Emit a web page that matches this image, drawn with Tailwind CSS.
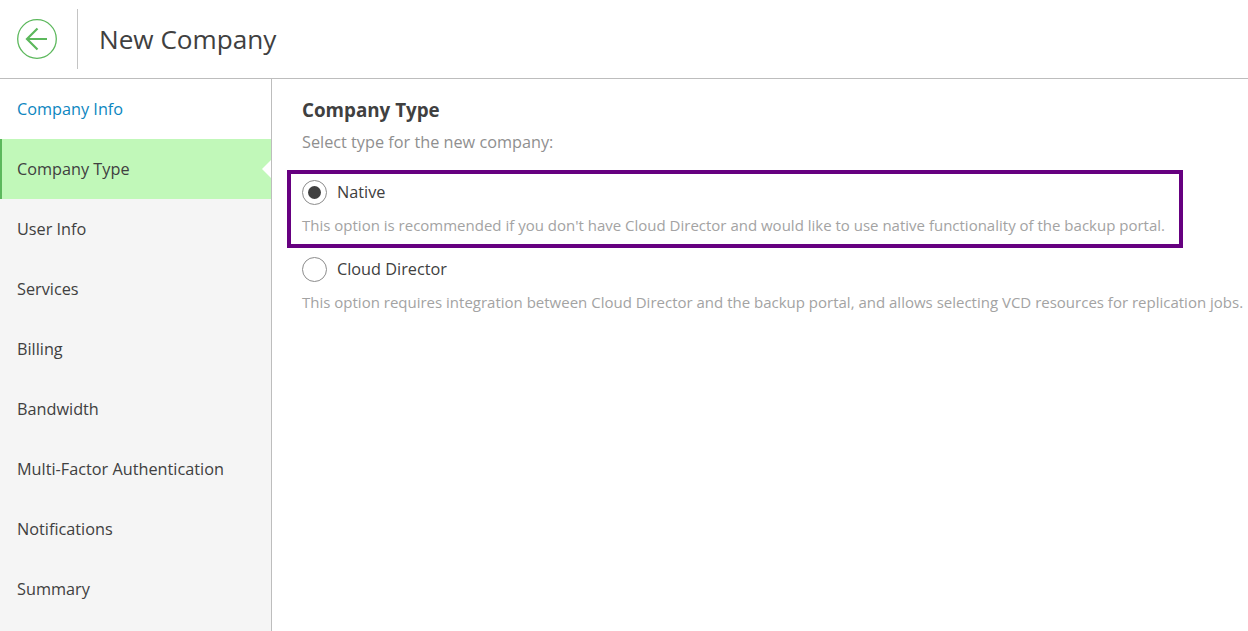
<!DOCTYPE html>
<html lang="en">
<head>
<meta charset="utf-8">
<title>New Company</title>
<script src="https://cdn.jsdelivr.net/npm/@tailwindcss/browser@4"></script>
</head>
<body class="bg-white font-['Open_Sans',sans-serif] text-[#404040] overflow-hidden">
<div class="relative h-[631px] flex flex-col">
    <!-- header -->
    <header class="h-[79px] shrink-0 flex items-center border-b border-[#bdbdbd]">
        <div class="ml-[17px] w-10 h-10 shrink-0">
            <svg viewBox="0 0 40 40" class="w-10 h-10" fill="none" stroke="#5cb85c">
                <circle cx="20" cy="20" r="19.3" stroke-width="1.3"/>
                <path d="M10 20H30M20.5 9.5L10 20L20.5 30.5" stroke-width="2.2"/>
            </svg>
        </div>
        <div class="ml-5 w-px h-[60px] bg-[#c4c4c4]"></div>
        <h1 class="ml-[21px] text-[26.15px] leading-none">New Company</h1>
    </header>

    <div class="flex flex-1 min-h-0">
        <!-- wizard steps -->
        <nav class="w-[272px] shrink-0 bg-[#f5f5f5] border-r border-[#bdbdbd] text-[16.25px]">
            <div class="h-[60px] flex items-center pl-[17px] bg-white text-[#0d86c0]">Company Info</div>
            <div class="relative h-[60px] flex items-center pl-[15px] bg-[#c1f8b9] border-l-2 border-[#5cb85c]">
                Company Type
                <span class="absolute right-0 top-[21px] w-0 h-0 border-y-[9px] border-y-transparent border-r-[9px] border-r-white"></span>
            </div>
            <div class="h-[60px] flex items-center pl-[17px]">User Info</div>
            <div class="h-[60px] flex items-center pl-[17px]">Services</div>
            <div class="h-[60px] flex items-center pl-[17px]">Billing</div>
            <div class="h-[60px] flex items-center pl-[17px]">Bandwidth</div>
            <div class="h-[60px] flex items-center pl-[17px]">Multi-Factor Authentication</div>
            <div class="h-[60px] flex items-center pl-[17px]">Notifications</div>
            <div class="h-[60px] flex items-center pl-[17px]">Summary</div>
        </nav>

        <!-- content -->
        <main class="flex-1 min-w-0 pl-[30px] pt-[19px] whitespace-nowrap">
            <h2 class="text-[18.8px] font-bold leading-[25px]">Company Type</h2>
            <p class="mt-[8px] text-[16.25px] leading-[22px] text-[#8f8f8f]">Select type for the new company:</p>

            <div class="mt-[26px] flex items-center h-[26px]">
                <span class="w-[25px] h-[25px] rounded-full border border-[#8c8c8c] flex items-center justify-center">
                    <span class="w-[13px] h-[13px] rounded-full bg-[#404040]"></span>
                </span>
                <span class="ml-[10px] text-[16.25px]">Native</span>
            </div>
            <p class="mt-[10px] text-[15px] leading-[20px] text-[#a3a3a3]">This option is recommended if you don't have Cloud Director and would like to use native functionality of the backup portal.</p>

            <div class="mt-[21px] flex items-center h-[26px]">
                <span class="w-[25px] h-[25px] rounded-full border border-[#8c8c8c]"></span>
                <span class="ml-[10px] text-[16.25px]">Cloud Director</span>
            </div>
            <p class="mt-[10px] text-[15px] leading-[20px] text-[#a3a3a3]">This option requires integration between Cloud Director and the backup portal, and allows selecting VCD resources for replication jobs.</p>
        </main>
    </div>

    <!-- highlight drawn over the screenshot -->
    <div class="absolute left-[287px] top-[170px] w-[896px] h-[78px] border-4 border-[#660080]"></div>
</div>
</body>
</html>
